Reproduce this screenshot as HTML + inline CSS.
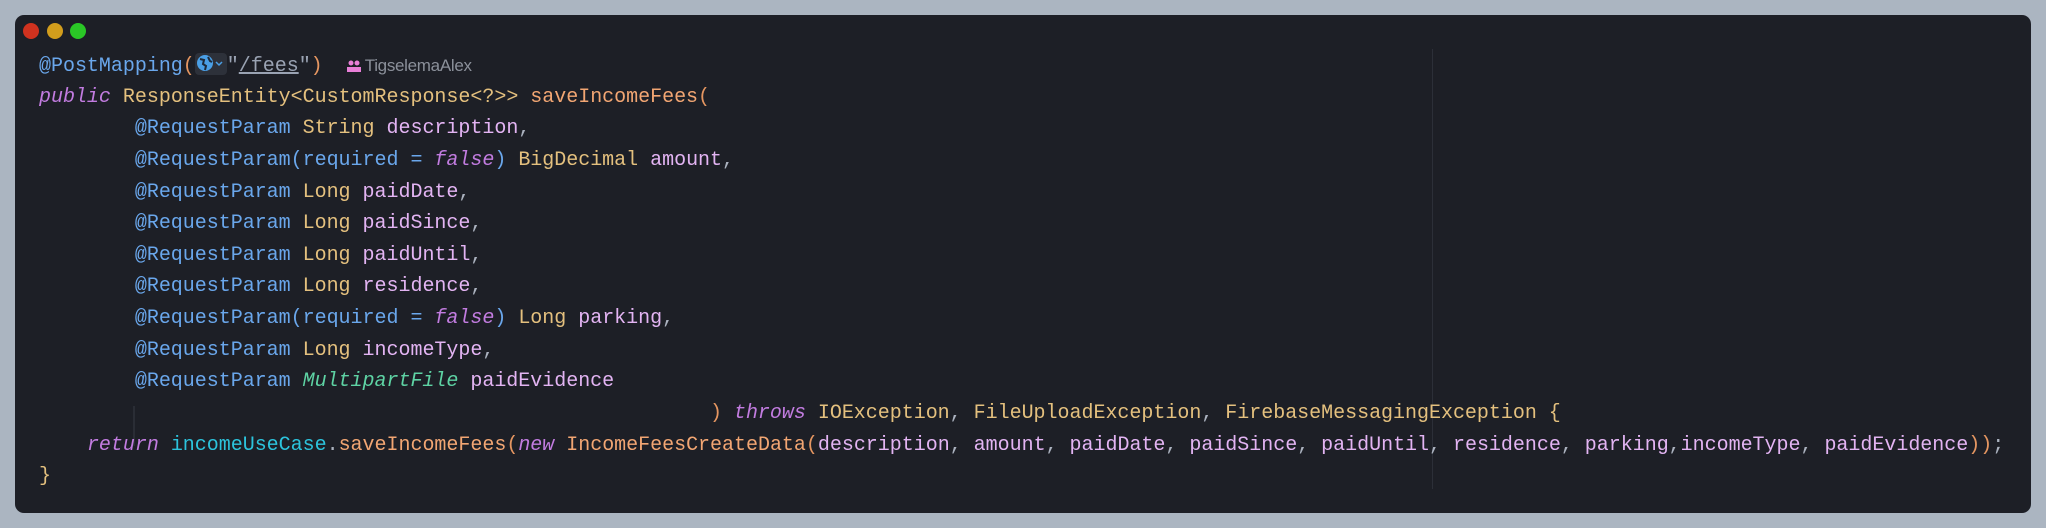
<!DOCTYPE html>
<html><head><meta charset="utf-8"><style>
html,body{margin:0;padding:0}
body{width:2046px;height:528px;background:#abb5c1;position:relative;overflow:hidden}
.win{position:absolute;left:15px;top:15px;width:2016px;height:498px;background:#1d1f26;border-radius:9px}
.dot{position:absolute;top:8px;width:16px;height:16px;border-radius:50%}
.code{position:absolute;left:39px;top:50px;font-family:"Liberation Mono",monospace;font-size:20px;line-height:31.65px;color:#abb2bf;letter-spacing:-0.02px}
.code div{height:31.65px;white-space:pre}
.an{color:#6aa7ec}.ty{color:#e4c07e}.fn{color:#f2a673}.pa{color:#e3b4f3}.kw{color:#c27ce0;font-style:italic}
.pr{color:#e59661}.cy{color:#2cc3dc}.gr{color:#5ed3a4;font-style:italic}.st{color:#9aa3b3}
.vl{position:absolute;left:1432px;top:49px;width:1px;height:440px;background:#2c2f38}
.ig{position:absolute;left:133px;top:406px;width:2px;height:40px;background:#2a2d35}
.auth{font-family:"Liberation Sans",sans-serif;font-size:17px;color:#8b909a;letter-spacing:-0.3px}
.globe{display:inline-block;width:32px;height:22px;background:#2d313a;border-radius:4px;vertical-align:-4px;position:relative}
</style></head><body>
<div class="win">
<div class="dot" style="left:8px;background:#d0321f"></div>
<div class="dot" style="left:32px;background:#d29d1c"></div>
<div class="dot" style="left:55px;background:#2ac726"></div>
</div>
<div class="vl"></div>
<div class="ig"></div>
<div class="code"><div><span class="an">@PostMapping</span><span class="pr">(</span><span class="globe"><svg width="32" height="22" style="position:absolute;left:0;top:0"><circle cx="10" cy="10" r="8" fill="#4a9fe6"/><path d="M5 6 L9 7 L8 11 L11 13 L10 17 M13 4 L15 8 L17 9" stroke="#1d2a3a" stroke-width="2" fill="none"/><path d="M21 9 L24 12 L27 9" stroke="#4a9fe6" stroke-width="1.5" fill="none"/></svg></span><span class="st">"<u>/fees</u>"</span><span class="pr">)</span>  <span class="auth"><svg width="14" height="12" style="vertical-align:-1px"><circle cx="4" cy="3" r="2.5" fill="#e87fd8"/><circle cx="10" cy="3" r="2.5" fill="#e87fd8"/><rect x="0" y="7" width="14" height="5" fill="#e87fd8"/></svg> TigselemaAlex</span></div><div><span class="kw">public</span> <span class="ty">ResponseEntity&lt;CustomResponse&lt;?&gt;&gt;</span> <span class="fn">saveIncomeFees</span><span class="pr">(</span></div><div>        <span class="an">@RequestParam</span> <span class="ty">String</span> <span class="pa">description</span>,</div><div>        <span class="an">@RequestParam(required = </span><span class="kw">false</span><span class="an">)</span> <span class="ty">BigDecimal</span> <span class="pa">amount</span>,</div><div>        <span class="an">@RequestParam</span> <span class="ty">Long</span> <span class="pa">paidDate</span>,</div><div>        <span class="an">@RequestParam</span> <span class="ty">Long</span> <span class="pa">paidSince</span>,</div><div>        <span class="an">@RequestParam</span> <span class="ty">Long</span> <span class="pa">paidUntil</span>,</div><div>        <span class="an">@RequestParam</span> <span class="ty">Long</span> <span class="pa">residence</span>,</div><div>        <span class="an">@RequestParam(required = </span><span class="kw">false</span><span class="an">)</span> <span class="ty">Long</span> <span class="pa">parking</span>,</div><div>        <span class="an">@RequestParam</span> <span class="ty">Long</span> <span class="pa">incomeType</span>,</div><div>        <span class="an">@RequestParam</span> <span class="gr">MultipartFile</span> <span class="pa">paidEvidence</span></div><div>                                                        <span class="pr">)</span> <span class="kw">throws</span> <span class="ty">IOException</span>, <span class="ty">FileUploadException</span>, <span class="ty">FirebaseMessagingException</span> <span class="ty">{</span></div><div>    <span class="kw">return</span> <span class="cy">incomeUseCase</span>.<span class="fn">saveIncomeFees</span><span class="pr">(</span><span class="kw">new</span> <span class="fn">IncomeFeesCreateData</span><span class="pr">(</span><span class="pa">description</span>, <span class="pa">amount</span>, <span class="pa">paidDate</span>, <span class="pa">paidSince</span>, <span class="pa">paidUntil</span>, <span class="pa">residence</span>, <span class="pa">parking</span>,<span class="pa">incomeType</span>, <span class="pa">paidEvidence</span><span class="pr">))</span>;</div><div><span class="ty">}</span></div></div>
</body></html>
